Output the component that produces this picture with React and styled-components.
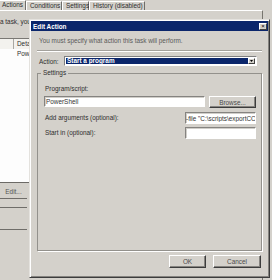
import styled, { createGlobalStyle } from "styled-components";

const GlobalStyle = createGlobalStyle`
  html, body {
    margin: 0;
    padding: 0;
  }
  body {
    width: 272px;
    height: 280px;
    overflow: hidden;
    background: #d4d1cb;
    font-family: "Liberation Sans", Arial, sans-serif;
    font-size: 6.4px;
    color: #2e2e2e;
  }
`;

const Screen = styled.div`
  position: relative;
  width: 272px;
  height: 280px;
  overflow: hidden;
`;

/* task properties window behind the dialog */
const BackWindow = styled.div`
  display: flex;
  flex-direction: column;
  height: 100%;
`;

const TabBar = styled.div`
  display: flex;
  align-items: flex-end;
  height: 10px;
`;

const Tab = styled.div`
  box-sizing: border-box;
  width: ${(p) => p.$w}px;
  height: ${(p) => (p.$active ? 10 : 9)}px;
  padding-left: ${(p) => (p.$first ? 2 : 3)}px;
  line-height: 8px;
  white-space: nowrap;
  border-top: 1px solid #fff;
  border-left: ${(p) => (p.$first ? "none" : "1px solid #fff")};
  border-right: 1px solid #6f6d69;
`;

const TabPanel = styled.div`
  flex: 1;
  width: 263px;
  box-sizing: border-box;
  border-top: 1px solid #fff;
  border-right: 1px solid #77756f;
  display: flex;
  flex-direction: column;
`;

const Hint = styled.div`
  margin-top: 7px;
  line-height: 8px;
  white-space: nowrap;
`;

const ActionList = styled.div`
  margin-top: 12px;
  height: 145px;
  box-sizing: border-box;
  background: #fdfdfd;
  border-top: 1px solid #7a7874;
  border-bottom: 1px solid #6c6a66;
`;

const ListLine = styled.div`
  display: flex;
  height: ${(p) => (p.$head ? 10 : 9)}px;
  line-height: 9px;
  background: ${(p) => (p.$head ? "#f3f2ee" : "transparent")};
  white-space: nowrap;
`;

const ListCell = styled.div`
  box-sizing: border-box;
  width: ${(p) => (p.$w ? `${p.$w}px` : "auto")};
  padding-left: ${(p) => (p.$w ? 0 : 3)}px;
  border-right: ${(p) => (p.$divider ? "1px solid #a9a7a2" : "none")};
`;

const SideButton = styled.div`
  height: ${(p) => p.$h}px;
  width: 27px;
  border-bottom: 1px solid #6f6d69;
  text-align: center;
  line-height: ${(p) => p.$h + 2}px;
  color: #555;
`;

/* Edit Action dialog */
const Dialog = styled.div`
  position: absolute;
  left: 29px;
  top: 19px;
  width: 241px;
  height: 259px;
  box-sizing: border-box;
  padding: 1px;
  background: #d4d1cb;
  border: 1px solid;
  border-color: #e4e2de #3c3c3c #3c3c3c #e4e2de;
  box-shadow: inset 1px 1px 0 #fff, inset -1px -1px 0 #85837f;
  display: flex;
  flex-direction: column;
`;

const TitleBar = styled.div`
  height: 10px;
  display: flex;
  align-items: center;
  justify-content: space-between;
  padding-left: 2px;
  background: #0b266b;
  color: #fff;
  font-weight: bold;
`;

const CloseButton = styled.div`
  box-sizing: border-box;
  width: 8px;
  height: 7px;
  margin-right: 1px;
  background: #d4d1cb;
  border: 1px solid;
  border-color: #fff #404040 #404040 #fff;
  color: #000;
  font-size: 6px;
  line-height: 5px;
  text-align: center;
  font-weight: normal;
`;

const Body = styled.div`
  flex: 1;
  display: flex;
  flex-direction: column;
  padding: 0 6px 8px 6px;
`;

const Intro = styled.div`
  margin: 6px 0 0 2px;
  line-height: 8px;
  color: #5a5a5a;
`;

const Separator = styled.div`
  margin-top: 5px;
  border-top: 1px solid #a3a19c;
  border-bottom: 1px solid #fff;
`;

const ActionRow = styled.div`
  margin-top: 4px;
  height: 10px;
  display: flex;
  align-items: center;
`;

const ActionLabel = styled.span`
  width: 25px;
  margin-left: 2px;
`;

const SelectBox = styled.div`
  flex: 1;
  height: 10px;
  margin-right: 5px;
  box-sizing: border-box;
  display: flex;
  padding: 1px;
  background: #fff;
  border: 1px solid;
  border-color: #808080 #fff #fff #808080;
`;

const Highlight = styled.div`
  flex: 1;
  background: #0b266b;
  color: #fff;
  line-height: 6px;
  padding-left: 1px;
  font-weight: bold;
`;

const ArrowButton = styled.div`
  box-sizing: border-box;
  width: 7px;
  background: #d4d1cb;
  border: 1px solid;
  border-color: #fff #404040 #404040 #fff;
  display: flex;
  align-items: center;
  justify-content: center;
`;

const Group = styled.fieldset`
  flex: 1;
  margin: 3px 0 0 0;
  padding: 0 5px 0 6px;
  border: 1px solid #93918c;
  box-shadow: 1px 1px 0 #fff;
  min-width: 0;
`;

const Legend = styled.legend`
  margin-left: -3px;
  padding: 0 2px;
  line-height: 8px;
`;

const FieldLabel = styled.div`
  margin: ${(p) => p.$top}px 0 0 1px;
  line-height: 8px;
  white-space: nowrap;
`;

const FieldRow = styled.div`
  display: flex;
  align-items: ${(p) => (p.$center ? "center" : "flex-start")};
  gap: 4px;
  height: 12px;
  margin-top: ${(p) => p.$top}px;
`;

const TextField = styled.input`
  box-sizing: border-box;
  width: ${(p) => (p.$w ? `${p.$w}px` : "auto")};
  flex: ${(p) => (p.$w ? "none" : 1)};
  min-width: 0;
  height: ${(p) => p.$h}px;
  margin: 0 0 0 ${(p) => (p.$w ? "auto" : 0)};
  padding: 0 0 0 ${(p) => (p.$w ? 0 : 1)}px;
  font-family: inherit;
  font-size: 6.4px;
  color: #333;
  background: #fff;
  border: 1px solid;
  border-color: #858380 #fff #fff #858380;
  box-shadow: inset 1px 1px 0 #d0cec9;
  outline: none;
`;

const Button = styled.button`
  box-sizing: border-box;
  width: ${(p) => p.$w}px;
  height: ${(p) => p.$h}px;
  padding: 0;
  font-family: inherit;
  font-size: 6.4px;
  color: #4a4a4a;
  background: #d4d1cb;
  border: 1px solid;
  border-color: #fff #3c3c3c #3c3c3c #fff;
  box-shadow: inset -1px -1px 0 #85837f;
`;

const ButtonBar = styled.div`
  display: flex;
  justify-content: flex-end;
  gap: 7px;
  margin: 4px 1px 0 0;
`;

export default function App() {
  return (
    <Screen>
      <GlobalStyle />
      <BackWindow>
        <TabBar>
          <Tab $w={26} $first $active>
            Actions
          </Tab>
          <Tab $w={36}>Conditions</Tab>
          <Tab $w={27}>Settings</Tab>
          <Tab $w={56}>History (disabled)</Tab>
        </TabBar>
        <TabPanel>
          <Hint>a task, you must specify the action that will occur when your task starts.</Hint>
          <ActionList>
            <ListLine $head>
              <ListCell $w={14} $divider />
              <ListCell>Details</ListCell>
            </ListLine>
            <ListLine>
              <ListCell $w={14} />
              <ListCell>PowerShell -file "C:\scripts\exportCCM.ps1"</ListCell>
            </ListLine>
          </ActionList>
          <SideButton $h={15}>Edit...</SideButton>
          <SideButton $h={8} />
          <SideButton $h={21} />
        </TabPanel>
      </BackWindow>

      <Dialog>
        <TitleBar>
          Edit Action
          <CloseButton>×</CloseButton>
        </TitleBar>
        <Body>
          <Intro>You must specify what action this task will perform.</Intro>
          <Separator />
          <ActionRow>
            <ActionLabel>Action:</ActionLabel>
            <SelectBox>
              <Highlight>Start a program</Highlight>
              <ArrowButton>
                <svg width="3" height="2" viewBox="0 0 3 2">
                  <path d="M0 0h3L1.5 2z" fill="#000" />
                </svg>
              </ArrowButton>
            </SelectBox>
          </ActionRow>
          <Group>
            <Legend>Settings</Legend>
            <FieldLabel $top={8}>Program/script:</FieldLabel>
            <FieldRow $top={3}>
              <TextField $h={11} readOnly defaultValue="PowerShell" />
              <Button $w={47} $h={12}>
                Browse...
              </Button>
            </FieldRow>
            <FieldRow $top={4} $center>
              <FieldLabel $top={0}>Add arguments (optional):</FieldLabel>
              <TextField
                $w={71}
                $h={12}
                readOnly
                defaultValue={'-file "C:\\scripts\\exportCCM.ps1"'}
              />
            </FieldRow>
            <FieldRow $top={3} $center>
              <FieldLabel $top={0}>Start in (optional):</FieldLabel>
              <TextField $w={71} $h={12} readOnly defaultValue="" />
            </FieldRow>
          </Group>
          <ButtonBar>
            <Button $w={37} $h={13}>
              OK
            </Button>
            <Button $w={48} $h={13}>
              Cancel
            </Button>
          </ButtonBar>
        </Body>
      </Dialog>
    </Screen>
  );
}
